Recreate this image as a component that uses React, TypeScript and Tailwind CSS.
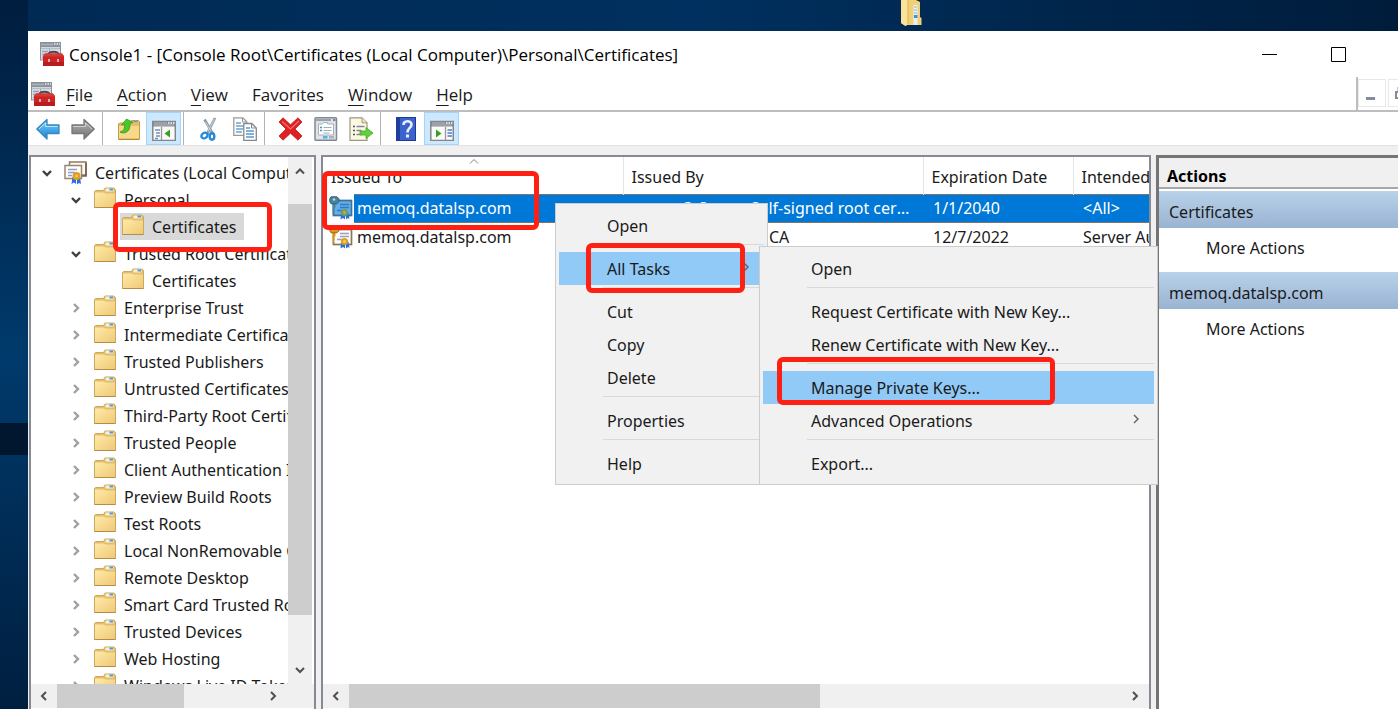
import type { ReactNode } from 'react';

const treeItems = [
  'Enterprise Trust',
  'Intermediate Certification Authorities',
  'Trusted Publishers',
  'Untrusted Certificates',
  'Third-Party Root Certification Authorities',
  'Trusted People',
  'Client Authentication Issuers',
  'Preview Build Roots',
  'Test Roots',
  'Local NonRemovable Certificates',
  'Remote Desktop',
  'Smart Card Trusted Roots',
  'Trusted Devices',
  'Web Hosting',
  'Windows Live ID Token Issuer',
];

function ConsoleIcon() {
  return (
    <svg width="24" height="24" viewBox="0 0 24 24" className="shrink-0" aria-hidden="true">
      <rect x="0.5" y="0.5" width="20" height="17.500" fill="#d9dfe6" stroke="#8b9199" />
      <rect x="0" y="0" width="21" height="5" fill="#8a929c" />
      <path d="M1 2.500h12" stroke="#aab3be" strokeWidth="1.500" />
      <path d="M14 2h1.500M16.500 2h1.500M19 2h1" stroke="#e8edf2" strokeWidth="1.500" />
      <path d="M1 6.500h19" stroke="#b4becb" strokeWidth="1.500" />
      <path d="M2 9.500h6M2 12.500h4M2 15.500h2" stroke="#93a2b6" strokeWidth="1.500" />
      <path d="M9.500 7v3" stroke="#9aa6b5" />
      <path d="M8.500 12.500c0-2 1.500-2.800 5-2.800s5 .8 5 2.800" fill="none" stroke="#4c4c50" strokeWidth="2" />
      <path d="M5 11.500h17l2 2.500v10H3V14z" fill="#cf2423" />
      <path d="M5 11.500h17l2 3H3z" fill="#d63a36" />
      <path d="M3 20h21v4H3z" fill="#b81c1c" />
      <rect x="8" y="17" width="2" height="3" fill="#c4b4b4" />
      <rect x="17" y="17" width="2" height="3" fill="#c4b4b4" />
    </svg>
  );
}

function FolderIcon() {
  return (
    <svg width="22" height="22" viewBox="0 0 22 22" className="shrink-0" aria-hidden="true">
      <defs>
        <linearGradient id="folder" x1="0" y1="0" x2="1" y2="1">
          <stop offset="0" stopColor="#ffeaa8" />
          <stop offset="1" stopColor="#eec977" />
        </linearGradient>
      </defs>
      <path d="M.5 20.500V4.500l1-1h8l1.500-2.500h9l1.500 1.500v18z" fill="#e3bd69" stroke="#cfa85c" />
      <rect x="11.500" y="1.500" width="8" height="3" fill="#f8f0d8" />
      <rect x="15.500" y="1.500" width="3.500" height="2" fill="#4f9ad6" />
      <path d="M1 20V5.500h8.500l2.500 1h9V20z" fill="url(#folder)" />
      <path d="M.5 20.500h21" stroke="#b58d45" />
    </svg>
  );
}

function CertStoreIcon() {
  return (
    <svg width="23" height="24" viewBox="0 0 23 24" className="shrink-0" aria-hidden="true">
      <rect x="5.500" y="1" width="16.500" height="13" fill="#fdfaf2" stroke="#8c7965" strokeWidth="1.500" />
      <path d="M22 2v13h-6" fill="none" stroke="#6f5b48" strokeWidth="1.500" />
      <rect x="1" y="4.500" width="16.500" height="13" fill="#fffdf8" stroke="#9a8670" strokeWidth="1.500" />
      <path d="M4 8.500h9M4 11.500h7M4 14.500h4" stroke="#8ca0d8" strokeWidth="1.300" />
      <path d="M8.500 16l-1 7 2.500-1.500 2 1.500v-6zM13 17v6.500l2-1.500 2 1-1-7z" fill="#2f6fd8" />
      <circle cx="12.500" cy="15" r="4" fill="#dda021" />
      <circle cx="12.500" cy="15" r="1.600" fill="#f2c655" />
    </svg>
  );
}

function CertIcon({ selected }: { selected?: boolean }) {
  const paper = selected ? '#62aee8' : '#fffdf7';
  const edge = selected ? '#3a7299' : '#8d7458';
  const key = selected ? '#4a8299' : '#d99a20';
  return (
    <svg width="24" height="24" viewBox="0 0 24 24" className="shrink-0" aria-hidden="true">
      <rect x="4.500" y="4.500" width="18" height="15" fill={paper} stroke={edge} strokeWidth="1.700" />
      <path d="M11 8.500h9M11 11.500h9M8 14.500h5" stroke={selected ? '#2f7ac4' : '#93a0c4'} strokeWidth="1.300" />
      <path d="M12 17l-.500 6.500 2.500-1.500 2 1.500v-6zM17 17v6.500l2-1.500 1.500 1-1-6z" fill="#2472d8" />
      <circle cx="15.500" cy="16.500" r="3.600" fill={selected ? '#7b9a5b' : '#dda021'} />
      <circle cx="15.500" cy="16.500" r="1.400" fill={selected ? '#a3b56c' : '#f5cf66'} />
      <path d="M3.500 6v12.500l2-1.500-1-1.500 1.500-1.500-1-1.500L6.500 11V6z" fill={key} />
      <path d="M2 .800h6l2 2v3l-2 2H2l-1.200-2v-3z" fill={key} stroke={selected ? '#2d6580' : '#9c6a14'} />
      <circle cx="5" cy="3.500" r="1.300" fill={selected ? '#b5d8e8' : '#fff6dc'} />
    </svg>
  );
}

type Dir = 'up' | 'down' | 'left' | 'right';
const chevrons: Record<Dir, string> = {
  up: 'M2 8.500l4-4 4 4',
  down: 'M2 4l4 4 4-4',
  left: 'M8 2L4 6l4 4',
  right: 'M4 2l4 4-4 4',
};

function Chevron({ dir, color = '#505050', weight = 2 }: { dir: Dir; color?: string; weight?: number }) {
  return (
    <svg width="12" height="12" viewBox="0 0 12 12" className="shrink-0" aria-hidden="true">
      <path d={chevrons[dir]} fill="none" stroke={color} strokeWidth={weight} />
    </svg>
  );
}

function Expander({ open }: { open?: boolean }) {
  return (
    <button type="button" aria-label={open ? 'Collapse' : 'Expand'} className="flex w-6 shrink-0 items-center justify-center">
      {open ? <Chevron dir="down" color="#404040" weight={2.4} /> : <Chevron dir="right" color="#a0a0a0" weight={2.4} />}
    </button>
  );
}

function ToolButton({ label, active, children }: { label: string; active?: boolean; children: ReactNode }) {
  return (
    <button
      type="button"
      aria-label={label}
      className={`flex w-[35px] items-center justify-center border ${active ? 'border-[#a5d3fa] bg-[#cce8ff]' : 'border-transparent'}`}
    >
      <svg width="24" height="24" viewBox="0 0 24 24" aria-hidden="true">
        {children}
      </svg>
    </button>
  );
}

function ToolDivider() {
  return <span className="ml-0.5 mr-2 w-px bg-[#b4b4b4]" />;
}

function Toolbar() {
  return (
    <div className="flex h-[34px] shrink-0 border-b border-[#e3e3e3] bg-white pl-0.5">
      <ToolButton label="Back">
        <linearGradient id="blueArrow" x1="0" y1="0" x2="0" y2="1">
          <stop offset="0" stopColor="#7fd0fb" />
          <stop offset="1" stopColor="#1183d2" />
        </linearGradient>
        <path d="M.8 12L11 2.500V8h12v8.500H11V22z" fill="url(#blueArrow)" stroke="#3d86bf" strokeWidth="1.300" strokeLinejoin="round" />
        <path d="M3 12l6.500-6v3.500h12" fill="none" stroke="#b7e6ff" />
      </ToolButton>
      <ToolButton label="Forward">
        <linearGradient id="grayArrow" x1="0" y1="0" x2="0" y2="1">
          <stop offset="0" stopColor="#b4b4b4" />
          <stop offset="1" stopColor="#707070" />
        </linearGradient>
        <path d="M23.200 12L13 2.500V8H1v8.500h12V22z" fill="url(#grayArrow)" stroke="#777" strokeWidth="1.300" strokeLinejoin="round" />
        <path d="M2 9.500h12.500V6l6.500 6" fill="none" stroke="#cfcfcf" />
      </ToolButton>
      <ToolDivider />
      <ToolButton label="Up one level">
        <path d="M1.500 22V7l1-1h10l2-2.500h7l1 1V22z" fill="#e6c069" stroke="#c59b46" />
        <path d="M2 9h20v12.500H2z" fill="#f8d98a" />
        <path d="M16.500 4.500h4" stroke="#5da0d8" strokeWidth="1.500" />
        <path d="M3.500 14.500C7 14 8 11 7.500 7.500L4.500 8 9.500 2l6.500 3.500-3 1c.5 6-3 11-9.500 9z" fill="#4fc52c" stroke="#35981c" strokeWidth=".8" />
        <path d="M1.500 22.500h21" stroke="#b08636" />
      </ToolButton>
      <ToolButton label="Show or hide console tree" active>
        <rect x=".8" y="4.500" width="22.500" height="19" fill="#fafafa" stroke="#868686" strokeWidth="1.500" />
        <rect x="0" y="4" width="24" height="5.500" fill="#85898f" />
        <path d="M2 6h13M2 8h20" stroke="#b3bac2" />
        <path d="M16 6h1.500M18.500 6H20M21 6h1.500" stroke="#fff" strokeWidth="1.500" />
        <path d="M9.500 10v13" stroke="#999" strokeWidth="1.300" />
        <path d="M3 13h5M4 16h4M4 19h4M3 21.500h3" stroke="#7291b8" strokeWidth="1.300" />
        <path d="M18 12.500v8L12.500 16.500z" fill="#37a11d" />
      </ToolButton>
      <ToolDivider />
      <ToolButton label="Cut">
        <path d="M6.500 2.500L15 17M17 1L9 17" stroke="#8a98a5" strokeWidth="2.600" />
        <path d="M16.500 2L10 14.500M7.500 5L13 14" stroke="#dce3e8" strokeWidth=".8" />
        <ellipse cx="6.500" cy="18.500" rx="3.300" ry="2.600" transform="rotate(-35 6.500 18.500)" fill="none" stroke="#238bd8" strokeWidth="2.400" />
        <ellipse cx="14" cy="19.500" rx="2.300" ry="3.200" fill="none" stroke="#238bd8" strokeWidth="2.400" />
      </ToolButton>
      <ToolButton label="Copy">
        <path d="M.8 .8h9l4 4v13.500h-13z" fill="#fff" stroke="#9a9a9a" strokeWidth="1.300" />
        <path d="M9.500 1v4h4" fill="none" stroke="#9a9a9a" />
        <path d="M3 6h5M3 9h8M3 12h7M3 15h6" stroke="#6da2cd" strokeWidth="1.300" />
        <path d="M10.800 6.500h8l4.500 4.500v12.300H10.800z" fill="#fff" stroke="#888" strokeWidth="1.300" />
        <path d="M18.500 6.500V11h4.500" fill="none" stroke="#888" />
        <path d="M13 11h4M13 14h8M13 17h8M13 20h8" stroke="#5598d2" strokeWidth="1.400" />
      </ToolButton>
      <ToolDivider />
      <ToolButton label="Delete">
        <path d="M4 .8l7.500 7 7.500-7L23 5l-7 7 7 7-4 4.200-7.500-7-7.500 7L0 19l7-7-7-7z" fill="#e02124" stroke="#b91a1c" strokeWidth=".8" />
        <path d="M3 4.500L11.500 12 20 4" fill="none" stroke="#f57370" strokeWidth="1.200" />
      </ToolButton>
      <ToolButton label="Properties">
        <rect x="1" y=".8" width="21.500" height="22.500" rx="1" fill="#dfe3e7" stroke="#818890" strokeWidth="1.500" />
        <path d="M2 3h15" stroke="#98a2ad" strokeWidth="2" />
        <path d="M19 3h2.500" stroke="#667" strokeWidth="1.500" />
        <path d="M4.500 18V7h4l1-1.500h4V7h6v11z" fill="#fff" stroke="#aab1b8" />
        <path d="M6 10.500h2M6 13.500h2" stroke="#3d95cf" strokeWidth="1.500" />
        <path d="M9.500 10.500h8M9.500 13.500h8M9.500 16h6" stroke="#9db0bf" strokeWidth="1.200" />
        <rect x="9" y="19" width="4.500" height="2.500" fill="#4cb6e2" />
        <rect x="15" y="19" width="5" height="2.500" fill="#a9b1b9" />
      </ToolButton>
      <ToolButton label="Export list">
        <path d="M1 .8h12l5 5v17.500H1z" fill="#fdf8e4" stroke="#a0977a" strokeWidth="1.200" />
        <path d="M13 .8v5h5" fill="#efe6c6" stroke="#a0977a" />
        <path d="M4 9.500h2M4 13.500h2M4 17.500h2" stroke="#555" strokeWidth="1.500" />
        <path d="M7.500 9.500h8M7.500 13.500h5M7.500 17.500h5" stroke="#8485a5" strokeWidth="1.300" />
        <path d="M11 14h6v-3.500l7 5.500-7 5.500V18h-6z" fill="#5fd23c" stroke="#41a824" strokeWidth=".8" />
      </ToolButton>
      <ToolDivider />
      <ToolButton label="Help">
        <rect x="1.500" y=".5" width="19" height="23" fill="#3c63cc" stroke="#1e3a94" />
        <rect x="1.500" y=".5" width="3.500" height="23" fill="#1f3f9f" />
        <path d="M8.500 8c0-5 8-5 8-.5 0 3.500-4 3.500-4 8" fill="none" stroke="#e9effc" strokeWidth="2.600" />
        <rect x="11" y="17.500" width="3" height="3" fill="#e9effc" />
      </ToolButton>
      <ToolButton label="Show or hide action pane" active>
        <rect x=".8" y="4.500" width="22.500" height="19" fill="#fafafa" stroke="#868686" strokeWidth="1.500" />
        <rect x="0" y="4" width="24" height="5.500" fill="#85898f" />
        <path d="M2 6h13M2 8h20" stroke="#b3bac2" />
        <path d="M16 6h1.500M18.500 6H20M21 6h1.500" stroke="#fff" strokeWidth="1.500" />
        <path d="M15.500 10v13" stroke="#999" strokeWidth="1.300" />
        <path d="M17.500 13h4.500M17.500 16h4.500M17.500 19h4.500" stroke="#4b7fd0" strokeWidth="1.500" />
        <path d="M6 12.500v8l5.500-4z" fill="#37a11d" />
      </ToolButton>
    </div>
  );
}

function Menus() {
  const item = 'underline underline-offset-4 decoration-1';
  return (
    <div className="flex h-[35px] shrink-0 items-stretch font-['Open_Sans','Noto_Sans',sans-serif] text-[17px]">
      <div className="flex flex-1 items-center gap-6 border-b-2 border-r-2 border-[#bdbdbd] pl-[3px] pt-0.5">
        <span className="-mr-[13px] pb-0.5">
          <ConsoleIcon />
        </span>
        <button type="button"><span className={item}>F</span>ile</button>
        <button type="button"><span className={item}>A</span>ction</button>
        <button type="button"><span className={item}>V</span>iew</button>
        <button type="button">Fav<span className={item}>o</span>rites</button>
        <button type="button"><span className={item}>W</span>indow</button>
        <button type="button"><span className={item}>H</span>elp</button>
      </div>
      <div className="flex w-10 shrink-0 gap-0.5 overflow-hidden border-b-2 border-[#bdbdbd] pb-[3px] pt-0.5">
        <button type="button" aria-label="Minimize child window" className="flex w-7 shrink-0 items-end justify-center border border-[#e6e8ec] pb-1.5 pr-1">
          <span className="h-[3px] w-[9px] bg-[#848d9c]" />
        </button>
        <button type="button" aria-label="Restore child window" className="flex w-7 shrink-0 items-center border border-[#e6e8ec] pl-1.5">
          <svg width="12" height="12" viewBox="0 0 12 12" aria-hidden="true">
            <path d="M3.500 4V1h8v7H9" fill="none" stroke="#848d9c" strokeWidth="2" />
            <path d="M1 5h7.500v6H1z" fill="none" stroke="#848d9c" strokeWidth="2" />
          </svg>
        </button>
      </div>
    </div>
  );
}

function HorizontalScroll({ thumb }: { thumb: string }) {
  return (
    <div className="flex h-6 shrink-0 items-center bg-[#f0f0f0]">
      <button type="button" aria-label="Scroll left" className="flex w-[26px] justify-center">
        <Chevron dir="left" />
      </button>
      <div className="h-full flex-1">
        <div className={`h-full bg-[#cdcdcd] ${thumb}`} />
      </div>
      <button type="button" aria-label="Scroll right" className="flex w-7 justify-center">
        <Chevron dir="right" />
      </button>
    </div>
  );
}

function TreePane() {
  const row = 'flex h-[27px] items-center whitespace-nowrap';
  return (
    <nav className="flex w-[287px] shrink-0 flex-col border-2 border-[#868a92] border-b-0 bg-white" aria-label="Console tree">
      <div className="flex min-h-0 flex-1">
        <ul className="min-w-0 flex-1 overflow-hidden pl-1 pt-0.5">
          <li className={row}>
            <Expander open />
            <span className="ml-[5px] mr-2"><CertStoreIcon /></span>
            Certificates (Local Computer)
          </li>
          <li className={`${row} pl-[29px]`}>
            <Expander open />
            <span className="ml-1.5 mr-2 mb-1"><FolderIcon /></span>
            Personal
          </li>
          <li className={`${row} pl-[85px]`}>
            <span className="flex h-full items-center bg-[#d9d9d9] pl-0.5 pr-2">
              <span className="mb-1 mr-2"><FolderIcon /></span>
              Certificates
            </span>
          </li>
          <li className={`${row} pl-[29px]`}>
            <Expander open />
            <span className="ml-1.5 mr-2 mb-1"><FolderIcon /></span>
            Trusted Root Certification Authorities
          </li>
          <li className={`${row} pl-[87px]`}>
            <span className="mb-1 mr-2"><FolderIcon /></span>
            Certificates
          </li>
          {treeItems.map((name) => (
            <li key={name} className={`${row} pl-[29px]`}>
              <Expander />
              <span className="ml-1.5 mr-2 mb-1"><FolderIcon /></span>
              {name}
            </li>
          ))}
        </ul>
        <div className="mr-0.5 flex w-6 shrink-0 flex-col bg-[#f0f0f0]">
          <button type="button" aria-label="Scroll up" className="flex h-7 items-center justify-center">
            <Chevron dir="up" />
          </button>
          <div className="flex-1 pt-[19px]">
            <div className="h-[91%] bg-[#cdcdcd]" />
          </div>
          <button type="button" aria-label="Scroll down" className="flex h-7 items-center justify-center">
            <Chevron dir="down" />
          </button>
        </div>
      </div>
      <div className="mb-px flex bg-[#f0f0f0]">
        <div className="flex-1"><HorizontalScroll thumb="w-[63%]" /></div>
        <div className="w-[27px]" />
      </div>
    </nav>
  );
}

function ListPane() {
  const head = 'border-r border-[#e5e5e5] pl-2 pt-1 text-left font-normal';
  const cell = 'overflow-hidden text-ellipsis pl-2.5 pr-2';
  return (
    <main className="flex min-w-0 flex-1 flex-col border-2 border-[#868a92] border-b-0 bg-white">
      <div className="min-h-0 flex-1 overflow-hidden">
        <table className="w-full table-fixed border-collapse whitespace-nowrap">
          <colgroup>
            <col className="w-[31px]" />
            <col className="w-[269px]" />
            <col className="w-[300px]" />
            <col className="w-[150px]" />
            <col />
          </colgroup>
          <thead>
            <tr className="h-[37px]">
              <th colSpan={2} className={`${head} relative`}>
                <span className="absolute left-[145px] top-0 -mt-0.5">
                  <Chevron dir="up" color="#808080" weight={1} />
                </span>
                Issued To
              </th>
              <th className={head}>Issued By</th>
              <th className={head}>Expiration Date</th>
              <th className="overflow-hidden pl-2 pt-1 text-left font-normal">Intended Purposes</th>
            </tr>
          </thead>
          <tbody>
            <tr className="h-7 text-white">
              <td className="pl-1.5"><CertIcon selected /></td>
              <td className="border-y border-[#7d756b] bg-[#0078d7] pl-[3px]">memoq.datalsp.com</td>
              <td className={`${cell} border-y border-[#7d756b] bg-[#0078d7]`}>memoQ Server Self-signed root certificate</td>
              <td className={`${cell} border-y border-[#7d756b] bg-[#0078d7]`}>1/1/2040</td>
              <td className={`${cell} border-y border-[#7d756b] bg-[#0078d7]`}>&lt;All&gt;</td>
            </tr>
            <tr className="h-[29px]">
              <td className="pl-1.5"><CertIcon /></td>
              <td className="pl-[3px]">memoq.datalsp.com</td>
              <td className={cell}>Thawte TLS RSA 1 CA</td>
              <td className={cell}>12/7/2022</td>
              <td className="overflow-hidden pl-2.5">Server Authentication</td>
            </tr>
          </tbody>
        </table>
      </div>
      <div className="mb-px"><HorizontalScroll thumb="w-[61%]" /></div>
    </main>
  );
}

function ActionsPane() {
  const section = 'flex h-[37px] items-center bg-linear-to-b from-[#b9d2ea] to-[#99b3d2] pl-2.5 pt-1';
  const more = 'flex h-11 w-full items-center pb-1 pl-[47px]';
  return (
    <aside className="w-[242px] shrink-0 border-l-[3px] border-t-[3px] border-[#757575] bg-white">
      <h2 className="mb-0.5 flex h-[31px] items-center border-b-2 border-[#a8a8a8] bg-[#f0f0f0] pl-2 pt-1.5 font-bold text-black">Actions</h2>
      <div className={section}>Certificates</div>
      <button type="button" className={more}>More Actions</button>
      <div className={section}>memoq.datalsp.com</div>
      <button type="button" className={more}>More Actions</button>
    </aside>
  );
}

function MenuItem({ label, active, sub }: { label: string; active?: boolean; sub?: boolean }) {
  return (
    <button
      type="button"
      role="menuitem"
      className={`flex h-[33px] w-full items-center justify-between whitespace-nowrap pl-12 pr-3 ${active ? 'bg-[#91c9f7]' : ''}`}
    >
      {label}
      {sub && <span className="mb-1"><Chevron dir="right" color="#606060" weight={1.4} /></span>}
    </button>
  );
}

function MenuLine() {
  return (
    <div className="h-2.5 pl-11 pt-0.5">
      <div className="h-px bg-[#d9d9d9]" />
    </div>
  );
}

export default function App() {
  const marker = 'pointer-events-none absolute rounded-md border-[5px] border-[#ff2014]';
  return (
    <div className="relative h-screen overflow-hidden bg-linear-to-r from-[#002a54] via-[#00305f] to-[#001c3b] font-['Noto_Sans','Open_Sans',sans-serif] text-base leading-6 text-[#1a1a1a]">
      <div className="absolute inset-y-0 left-0 w-7 bg-linear-to-b from-[#001d3e] from-0% via-[#003a6c] via-50% to-[#001f40] to-100%" />
      <div className="absolute left-0 top-[423px] h-8 w-7 bg-[#00172f]" />
      <svg width="22" height="26" viewBox="0 0 22 26" className="absolute left-[901px] top-0" aria-hidden="true">
        <path d="M0 0h15l4 2v15l1.500 1v7H6l-1.500 1L0 23z" fill="#f1d178" />
        <path d="M0 0h7v24l-2.500 2L0 23z" fill="#fbe49a" />
        <path d="M7 0v24" stroke="#d9b457" />
        <path d="M12.500 5h4v20h-4z" fill="#e9f0f5" />
        <path d="M13 7h3M13 10h3M13 13h3" stroke="#8cb7d8" />
        <path d="M13 15h3.500v3H13z" fill="#3b93d5" />
      </svg>

      <div className="flex h-full flex-col pl-7 pt-[31px]">
        <div className="flex min-h-0 flex-1 flex-col bg-[#f0f0f0]">
          <header className="shrink-0 bg-white">
            <div className="flex h-[46px] items-center pl-3 pr-[52px] text-black">
              <ConsoleIcon />
              <h1 className="ml-[5px] flex-1 whitespace-nowrap pt-0.5 font-['Open_Sans','Noto_Sans',sans-serif] text-[17px]">
                Console1 - [Console Root\Certificates (Local Computer)\Personal\Certificates]
              </h1>
              <button type="button" aria-label="Minimize" className="mr-[54px]">
                <svg width="15" height="15" viewBox="0 0 15 15" aria-hidden="true"><path d="M0 7.500h15" stroke="#000" /></svg>
              </button>
              <button type="button" aria-label="Maximize">
                <svg width="15" height="15" viewBox="0 0 15 15" aria-hidden="true"><path d="M.5.5h14v14H.5z" fill="none" stroke="#000" /></svg>
              </button>
            </div>
            <Menus />
          </header>
          <Toolbar />
          <div className="flex min-h-0 flex-1 gap-[5px] pl-px pt-[9px]">
            <TreePane />
            <ListPane />
            <ActionsPane />
          </div>
        </div>
      </div>

      <div role="menu" className="absolute left-[555px] top-[203px] w-[213px] border border-[#cccccc] bg-[#f1f1f1] px-[3px] pb-1 pt-[5px]">
        <MenuItem label="Open" />
        <MenuLine />
        <MenuItem label="All Tasks" active sub />
        <MenuLine />
        <MenuItem label="Cut" />
        <MenuItem label="Copy" />
        <MenuItem label="Delete" />
        <MenuLine />
        <MenuItem label="Properties" />
        <MenuLine />
        <MenuItem label="Help" />
      </div>
      <div role="menu" className="absolute left-[759px] top-[246px] w-[399px] border border-[#cccccc] bg-[#f1f1f1] px-[3px] pb-1 pt-[5px]">
        <MenuItem label="Open" />
        <MenuLine />
        <MenuItem label="Request Certificate with New Key..." />
        <MenuItem label="Renew Certificate with New Key..." />
        <MenuLine />
        <MenuItem label="Manage Private Keys..." active />
        <MenuItem label="Advanced Operations" sub />
        <MenuLine />
        <MenuItem label="Export..." />
      </div>

      <div className={`${marker} left-[113px] top-[202px] h-[50px] w-[159px]`} />
      <div className={`${marker} left-[322px] top-[171px] h-[59px] w-[217px]`} />
      <div className={`${marker} left-[586px] top-[243px] h-[50px] w-[159px]`} />
      <div className={`${marker} left-[777px] top-[357px] h-[48px] w-[278px]`} />
    </div>
  );
}
